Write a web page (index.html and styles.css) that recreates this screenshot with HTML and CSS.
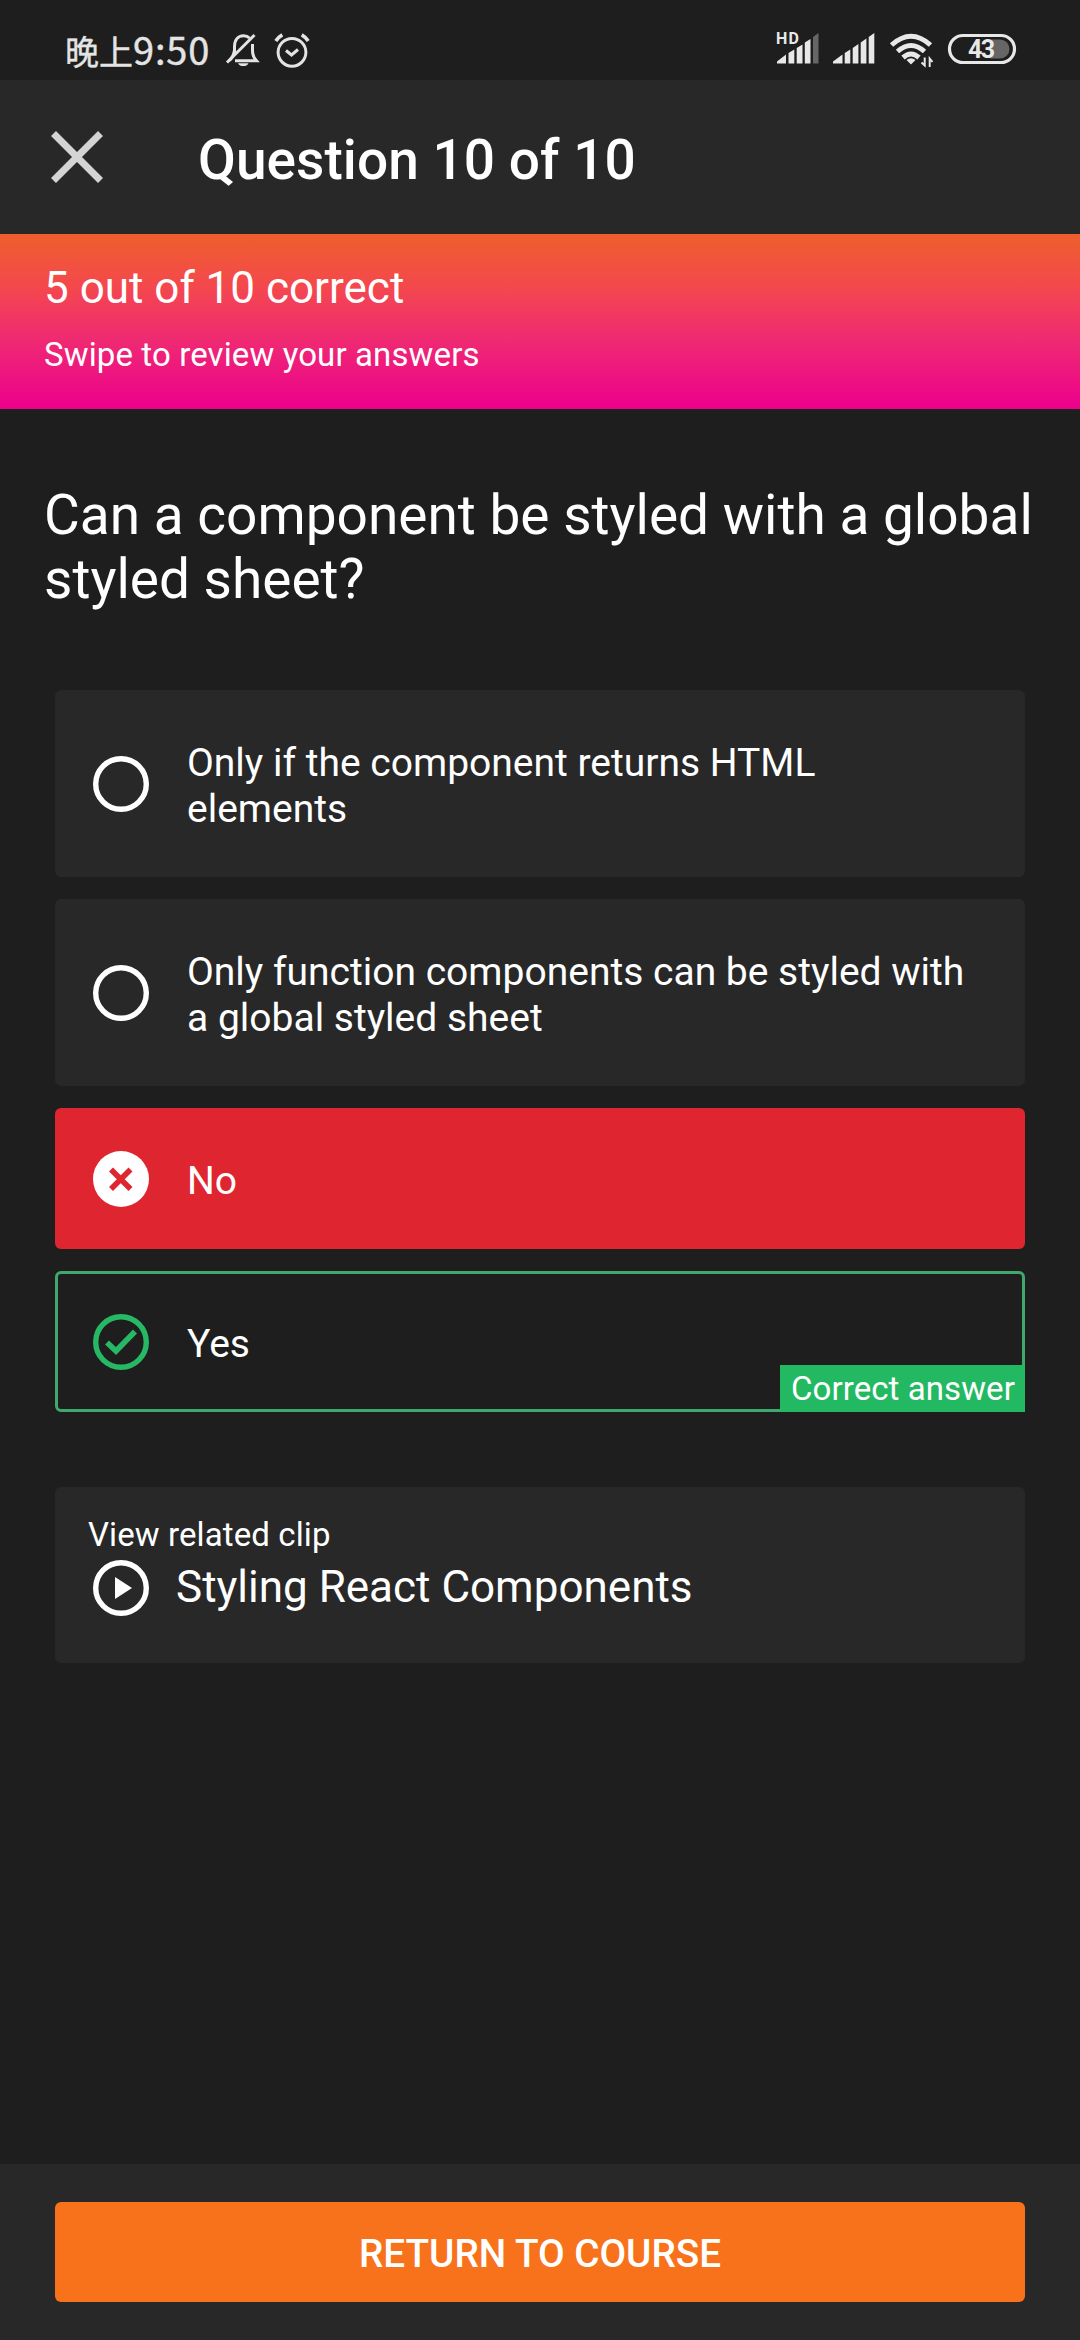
FILE: index.html
```html
<!DOCTYPE html>
<html lang="en">
<head>
<meta charset="utf-8">
<title>Question 10 of 10</title>
<link rel="stylesheet" href="styles.css">
</head>
<body>
<div class="screen">
  <div class="status">
    <div class="clock"><span class="period">晚上</span><span class="time">9:50</span></div>
    <svg class="status-left" width="86" height="40" viewBox="225 30 86 40" fill="none" stroke="#e4e4e4" stroke-width="3">
      <path d="M234.500 53V47C234.500 40 238 35.800 243.500 35.800C246 35.800 248 36.500 249.500 38M252.500 44V51C252.500 55 254 58 256.500 60.800H235M234.500 50C234 55 232.500 57.500 229.500 60.500"/>
      <path d="M227 62.500L254.500 35"/>
      <path d="M238 63.200H248.500C247 67 239.500 67 238 63.200Z" fill="#e4e4e4" stroke="none"/>
      <circle cx="292" cy="52.300" r="13.900"/>
      <path d="M286 50.500L291.500 55L298 49.500" stroke-width="3"/>
      <path d="M275.800 41Q278.300 37 282.300 34.800M308.200 41Q305.700 37 301.700 34.800" stroke-width="3.600"/>
    </svg>
    <svg class="status-right" width="244" height="42" viewBox="774 28 244 42" fill="#e8e8e8">
      <text class="hd" x="776" y="44" textLength="23">HD</text>
      <path d="M777 63.500V61.500L786 54.500V63.500ZM788.500 63.500V53L794.300 49.500V63.500ZM796.700 63.500V48L802.500 44.500V63.500ZM804.800 63.500V42.500L810.500 39V63.500Z"/>
      <path d="M813 63.500V37L818.500 33V63.500Z" fill="#666"/>
      <path d="M833 63.500V61.500L842.500 54.500V63.500ZM844.700 63.500V53L850.300 49.500V63.500ZM852.700 63.500V48L858.400 44V63.500ZM860.700 63.500V42.500L866.400 38.500V63.500ZM868.700 63.500V37L874.300 33V63.500Z"/>
      <g fill="none" stroke="#e8e8e8" stroke-width="5">
        <path d="M891.500 45Q911 27.500 930.500 45"/>
        <path d="M897.500 51.500Q911 39.500 924.500 51.500"/>
        <path d="M903 57.500Q911 50.500 919 57.500"/>
      </g>
      <path d="M906.500 60Q911 56.500 915.500 60L911 64.500Z"/>
      <path d="M924.700 57.500V65.500L921.500 62.500M929.700 67V58.500L932.500 62" fill="none" stroke="#e8e8e8" stroke-width="2"/>
      <rect x="949.500" y="35.500" width="65" height="27" rx="13.500" fill="none" stroke="#e8e8e8" stroke-width="3.200"/>
      <path d="M990 39.500H1000A9.200 9.200 0 0 1 1000 58.500H990Z" fill="#666"/>
      <text class="level" x="968" y="58" textLength="27">43</text>
    </svg>
  </div>

  <header class="toolbar">
    <svg class="close" width="52" height="52" viewBox="0 0 52 52"><path d="M2.500 2.500L49.500 49.500M49.500 2.500L2.500 49.500" stroke="#d4d4d4" stroke-width="7"/></svg>
    <h1 class="title">Question 10 of 10</h1>
  </header>

  <section class="banner">
    <div class="score">5 out of 10 correct</div>
    <div class="hint">Swipe to review your answers</div>
  </section>

  <main class="content">
    <h2 class="question">Can a component be styled with a global styled sheet?</h2>
    <ul class="options">
      <li class="option tall">
        <svg class="mark" viewBox="0 0 56 56"><circle cx="28" cy="28" r="25.300" fill="none" stroke="#fff" stroke-width="5.400"/></svg>
        <span class="label">Only if the component returns HTML elements</span>
      </li>
      <li class="option tall">
        <svg class="mark" viewBox="0 0 56 56"><circle cx="28" cy="28" r="25.300" fill="none" stroke="#fff" stroke-width="5.400"/></svg>
        <span class="label">Only function components can be styled with a global styled sheet</span>
      </li>
      <li class="option wrong">
        <svg class="mark" viewBox="0 0 56 56"><circle cx="28" cy="28" r="28" fill="#fff"/><path d="M18 18.500L37.500 38M37.500 18.500L18 38" stroke="#df2630" stroke-width="5.600"/></svg>
        <span class="label">No</span>
      </li>
      <li class="option right">
        <svg class="mark" viewBox="0 0 56 56" fill="none" stroke="#27b865"><circle cx="28" cy="28" r="25.300" stroke-width="5.400"/><path d="M14 28.500L23 37L42 17.500" stroke-width="5.600"/></svg>
        <span class="label">Yes</span>
        <span class="tag">Correct answer</span>
      </li>
    </ul>
    <section class="related">
      <div class="caption">View related clip</div>
      <div class="clip">
        <svg class="mark" viewBox="0 0 56 56"><circle cx="28" cy="28" r="25.300" fill="none" stroke="#fff" stroke-width="5.400"/><path d="M22 17L39 28L22 39Z" fill="#fff"/></svg>
        <span class="clip-name">Styling React Components</span>
      </div>
    </section>
  </main>

  <footer class="footer"><button class="return">RETURN TO COURSE</button></footer>
</div>
</body>
</html>
```

FILE: styles.css
```css
* { box-sizing: border-box; }
body {
  margin: 0;
  background: #1e1e1e;
  color: #fff;
  font-family: Roboto, "Noto Sans CJK SC", sans-serif;
}
h1, h2, ul { margin: 0; padding: 0; font-weight: 400; }
svg { display: block; flex: none; }

.screen {
  width: 1080px;
  height: 2340px;
  display: flex;
  flex-direction: column;
  overflow: hidden;
}

.status {
  height: 80px;
  padding: 28px 62px 0 65px;
  display: flex;
  align-items: flex-start;
  color: #e4e4e4;
}
.clock {
  width: 160px;
  font: 38px/42px "Noto Sans CJK SC", sans-serif;
  white-space: nowrap;
  -webkit-text-stroke: 0.4px #e4e4e4;
}
.period { font-size: 34px; }
.time { letter-spacing: 0.8px; }
.status-left { margin-top: 2px; }
.status-right { margin-left: auto; }
.hd { font: 700 16px Roboto, sans-serif; }
.level { font: 700 25px Roboto, sans-serif; }

.toolbar {
  height: 154px;
  background: #282828;
  display: flex;
  align-items: center;
  padding-left: 51px;
}
.close { margin-right: 95px; }
.title { font-size: 55px; line-height: 64px; font-weight: 500; padding-top: 6px; letter-spacing: 0.05px; }

.banner {
  height: 175px;
  padding: 28px 44px 0;
  background: linear-gradient(#ee5f2c, #f4484d 30%, #ef2a72 60%, #ec008c);
}
.score { font-size: 44px; line-height: 52px; }
.hint { font-size: 33px; line-height: 40px; margin-top: 21px; letter-spacing: 0.12px; }

.content { flex: 1; padding: 74px 44px 0; }
.question { font-size: 55px; line-height: 64px; }
.options {
  list-style: none;
  margin: 79px 11px 0;
  display: flex;
  flex-direction: column;
  gap: 22px;
}
.option {
  position: relative;
  height: 141px;
  padding: 0 50px 0 38px;
  display: flex;
  align-items: center;
  gap: 38px;
  border-radius: 6px;
}
.mark { width: 56px; height: 56px; }
.label { font-size: 39px; line-height: 46px; padding-top: 5px; }
.tall { height: 187px; background: #282828; }
.tall .label { max-width: 785px; }
.tall:first-child .label { max-width: 700px; }
.wrong { background: #df2630; }
.right { border: 3px solid #3fa86d; padding: 0 35px; }
.tag {
  position: absolute;
  right: -3px;
  bottom: -3px;
  width: 245px;
  height: 47px;
  padding-left: 11px;
  background: #23b963;
  font-size: 33px;
  line-height: 47px;
  letter-spacing: 0.08px;
  white-space: nowrap;
}

.related {
  margin: 75px 11px 0;
  height: 176px;
  padding: 28px 33px 0;
  background: #282828;
  border-radius: 6px;
}
.caption { font-size: 33px; line-height: 40px; letter-spacing: 0.1px; }
.clip { display: flex; align-items: center; gap: 27px; padding: 5px 0 0 5px; }
.clip-name { font-size: 44px; line-height: 52px; margin-top: -2px; }

.footer { height: 176px; padding: 38px 55px 0; background: #282828; }
.return {
  display: block;
  width: 100%;
  height: 100px;
  border: 0;
  border-radius: 6px;
  padding: 4px 0 0;
  background: #f8721b;
  color: #fff;
  font: 500 38.7px/46px Roboto, sans-serif;
}
```
